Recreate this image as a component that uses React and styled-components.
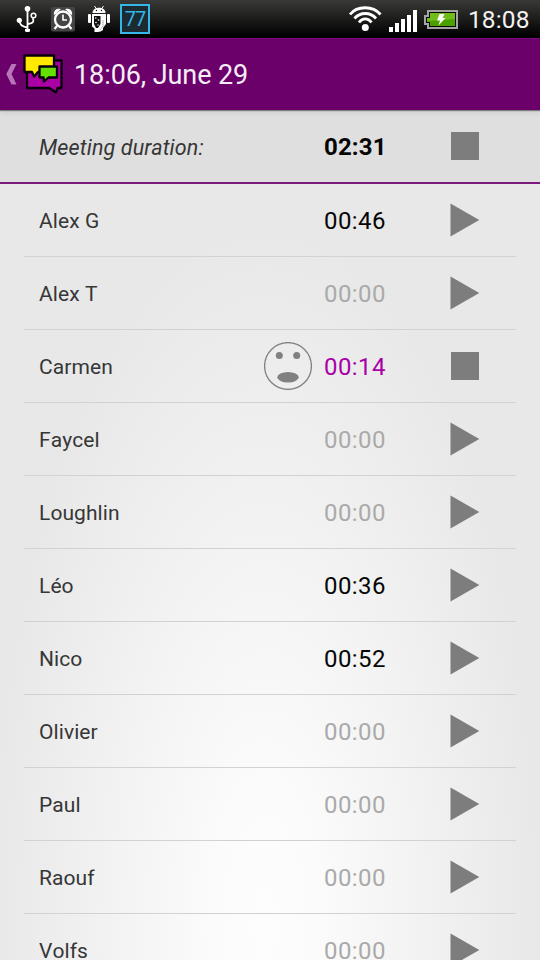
import React from "react";
import styled, { createGlobalStyle } from "styled-components";

const GlobalStyle = createGlobalStyle`
  * { box-sizing: border-box; }
  body { margin: 0; overflow: hidden; font-family: Roboto, "Liberation Sans", sans-serif; }
`;

const Screen = styled.div`
  width: 540px;
  height: 960px;
  overflow: hidden;
  display: flex;
  flex-direction: column;
  background: #e7e7e7;
`;

const StatusBar = styled.div`
  flex: none;
  height: 38px;
  display: flex;
  align-items: flex-start;
  justify-content: space-between;
  background: linear-gradient(#393937, #1c1c1b 50%, #000 96%);
  color: #fff;
`;

const StatusGroup = styled.div`
  display: flex;
  height: 38px;
`;

const Clock = styled.span`
  width: 72px;
  font-size: 24.5px;
  line-height: 40px;
  letter-spacing: 0.1px;
  color: #f2f2f2;
  white-space: nowrap;
`;

const CountBadge = styled.div`
  width: 30px;
  height: 30px;
  margin-top: 4px;
  border: 2px solid #35b7ea;
  background: #1b2b31;
  color: #35b7ea;
  font-size: 20px;
  font-weight: 400;
  line-height: 27px;
  letter-spacing: -1px;
  text-align: center;
`;

const ActionBar = styled.header`
  flex: none;
  height: 72px;
  display: flex;
  align-items: center;
  background: #6b006b;
  border-top: 1px solid #7e087e;
  position: relative;
  z-index: 1;
  box-shadow: 0 1px 1px rgba(0, 0, 0, 0.4), 0 2px 6px rgba(0, 0, 0, 0.1);
`;

const Title = styled.h1`
  margin: 0 0 0 11px;
  font-size: 27px;
  font-weight: 400;
  line-height: 72px;
  letter-spacing: -0.08px;
  color: #f5eef5;
  white-space: nowrap;
`;

const Summary = styled.section`
  flex: none;
  height: 74px;
  padding: 0 24px;
  background: #dfdfdf;
  border-bottom: 2px solid #7a1a7c;
`;

const List = styled.ul`
  flex: 1;
  min-height: 0;
  margin: 0;
  padding: 0 24px;
  list-style: none;
  background: radial-gradient(ellipse 275px 700px at 265px 740px, #fdfdfd 0%, #fbfbfb 20%, #e8e8e8 100%);
`;

const Entry = styled.li`
  height: 73px;
  border-bottom: 1px solid #d2d2d2;
`;

const Line = styled.div`
  height: 72px;
  display: grid;
  grid-template-columns: 225px 75px 102px 90px;
  align-items: center;
`;

const Name = styled.span`
  padding: 1px 0 0 15px;
  font-size: ${(p) => (p.$italic ? 21.5 : 21)}px;
  font-style: ${(p) => (p.$italic ? "italic" : "normal")};
  font-kerning: ${(p) => (p.$italic ? "normal" : "none")};
  line-height: 73px;
  letter-spacing: ${(p) => (p.$italic ? 0.14 : 0.08)}px;
  color: #363636;
  white-space: nowrap;
`;

const Mood = styled.span`
  height: 50px;
  padding-left: 15px;
`;

const timeColors = { used: "#060606", idle: "#aaa", active: "#a800a8" };

const Time = styled.span`
  padding-top: 1px;
  font-size: 24px;
  font-weight: ${(p) => (p.$bold ? 700 : 400)};
  line-height: 73px;
  letter-spacing: ${(p) => (p.$bold ? 0.15 : 0.4)}px;
  color: ${(p) => timeColors[p.$state]};
`;

const Control = styled.button`
  height: 38px;
  padding: 0 0 2px 24px;
  border: 0;
  background: none;
  text-align: left;
`;

const Icon = styled.svg`
  display: block;
  flex: none;
`;

const people = [
  ["Alex G", "00:46"],
  ["Alex T", "00:00"],
  ["Carmen", "00:14", true],
  ["Faycel", "00:00"],
  ["Loughlin", "00:00"],
  ["Léo", "00:36"],
  ["Nico", "00:52"],
  ["Olivier", "00:00"],
  ["Paul", "00:00"],
  ["Raouf", "00:00"],
  ["Volfs", "00:00"],
];

function NotificationIcons() {
  return (
    <Icon width="120" height="38" fill="none" stroke="#fff">
      <g strokeWidth="1.8">
        <path d="M27.5 8v21M27 27.500c-5.500-1-7.500-3-7.500-7M28 24c5-1 6-1.500 5-6" />
        <circle cx="27.500" cy="8.700" r="2.800" fill="#fff" stroke="none" />
        <circle cx="19.300" cy="20.300" r="2.600" fill="#fff" stroke="none" />
        <circle cx="33.500" cy="15.500" r="2.300" strokeWidth="1.500" />
        <path d="M25 29h5v1.500q0 1.500-1.500 1.500h-2q-1.500 0-1.500-1.500z" fill="#fff" stroke="none" />
      </g>
      <rect x="51" y="7" width="24" height="24.500" rx="2" fill="#454545" stroke="none" />
      <circle cx="63" cy="19.500" r="8" strokeWidth="2.300" />
      <path d="M63 14.500v5.500h4" strokeWidth="1.600" />
      <path d="M54.500 14a4 4 0 0 1 5-4.500zM71.500 14a4 4 0 0 0-5-4.500z" fill="#fff" strokeWidth="1.300" />
      <path d="M57 26l-2.500 3M69 26l2.500 3" strokeWidth="2.200" />
      <g fill="#fff" stroke="none">
        <path d="M92.500 13c0-7 13-7 13 0z" />
        <path d="M94.500 6l2 3M103.500 6l-2 3" stroke="#fff" strokeWidth="1" />
        <rect x="88" y="14" width="3" height="9" rx="1" />
        <rect x="107" y="14" width="3" height="9" rx="1" />
        <path d="M92 14h14v10l-3 4v2q-2 2-5.500 2h-3v-3.500l-2.500-2z" />
        <path d="M94 16h6.500v8l-2.500 4h-2l-2-4z" fill="#111" />
        <path d="M103 20v6l-3 4" fill="none" stroke="#999" strokeWidth=".7" />
        <circle cx="95.800" cy="18" r=".8" />
        <circle cx="98.500" cy="20" r=".8" />
        <circle cx="96" cy="22.500" r=".8" />
        <circle cx="98" cy="25" r=".7" />
      </g>
      <circle cx="96.500" cy="10.500" r=".7" fill="#111" stroke="none" />
      <circle cx="101.500" cy="10.500" r=".7" fill="#111" stroke="none" />
    </Icon>
  );
}

function SystemIcons() {
  return (
    <Icon width="120" height="38" viewBox="348 0 120 38" fill="none">
      <g stroke="#fff" strokeWidth="2.800">
        <path d="M350 14.500C357 5.500 373 5.500 380.500 14.500" />
        <path d="M354.500 18.500C360 11.800 370.500 11.800 376 18.500" />
        <path d="M359 22.500C362.500 17.800 368 17.800 371.500 22.500" />
      </g>
      <circle cx="365.300" cy="27.600" r="3.500" fill="#fff" />
      <path
        d="M389 27h4v5h-4zM395 23h4v9h-4zM401 19h4v13h-4zM407 15h4v17h-4zM413 10h4v22h-4z"
        fill="#fff"
      />
      <path d="M427 10h31v19h-31v-4h-3v-10h3z" fill="#a4a4a4" />
      <path d="M429 12h27v15h-27v-4h-3v-6h3z" fill="#080808" />
      <path d="M430 13h25v13h-25v-4h-3v-4h3z" fill="#4ba000" />
      <path d="M430 13h25v6l-28 2v-3h3z" fill="#70bd19" />
      <path d="M439.500 14h5l-2 4h3l-7 7.500 1.500-5h-3z" fill="#fff" />
    </Icon>
  );
}

function AppLogo() {
  return (
    <Icon width="63" height="71" viewBox="0 39 63 71" strokeLinejoin="round">
      <path d="M11.500 64H16.500L11.500 74L16.500 84.500H11.500L6.300 74z" fill="#b875b8" />
      <path d="M27 60.500H61.500V88H57.500L56 92.500L49.500 88H27z" fill="#aa00a5" stroke="#080008" strokeWidth="2.300" />
      <path d="M24.500 55.500H54V72H38L34 76.500L32 72H24.500z" fill="#ffe900" stroke="#080008" strokeWidth="2.300" />
      <path d="M39.500 66.500h17.500V77.500H48.500L44 81.500L43.500 77.500H39.500z" fill="#64df00" stroke="#080008" strokeWidth="2.300" />
    </Icon>
  );
}

function Face() {
  return (
    <Icon width="48" height="48" fill="#808080">
      <circle cx="24" cy="24" r="23.400" fill="none" stroke="#808080" strokeWidth="1.300" />
      <circle cx="15.300" cy="13.500" r="3.500" />
      <circle cx="32.700" cy="13.500" r="3.500" />
      <ellipse cx="24" cy="35.300" rx="10.700" ry="5.300" />
    </Icon>
  );
}

function ControlIcon({ running }) {
  return (
    <Icon width="32" height="36" fill="#7d7d7d">
      {running ? <path d="M1 4h28v28H1z" /> : <path d="M.5 1.500L29.300 18 .5 34.500z" />}
    </Icon>
  );
}

function TimerLine({ name, time, running, total }) {
  const state = total ? "used" : running ? "active" : time === "00:00" ? "idle" : "used";
  return (
    <Line>
      <Name $italic={total}>{name}</Name>
      <Mood>{running && !total && <Face />}</Mood>
      <Time $bold={total} $state={state}>{time}</Time>
      <Control aria-label={running ? "Stop" : "Start"}>
        <ControlIcon running={running} />
      </Control>
    </Line>
  );
}

export default function App() {
  return (
    <>
      <GlobalStyle />
      <Screen>
        <StatusBar>
          <StatusGroup>
            <NotificationIcons />
            <CountBadge>77</CountBadge>
          </StatusGroup>
          <StatusGroup>
            <SystemIcons />
            <Clock>18:08</Clock>
          </StatusGroup>
        </StatusBar>
        <ActionBar>
          <AppLogo />
          <Title>18:06, June 29</Title>
        </ActionBar>
        <Summary>
          <TimerLine name="Meeting duration:" time="02:31" running total />
        </Summary>
        <List>
          {people.map(([name, time, running]) => (
            <Entry key={name}>
              <TimerLine name={name} time={time} running={running} />
            </Entry>
          ))}
        </List>
      </Screen>
    </>
  );
}
